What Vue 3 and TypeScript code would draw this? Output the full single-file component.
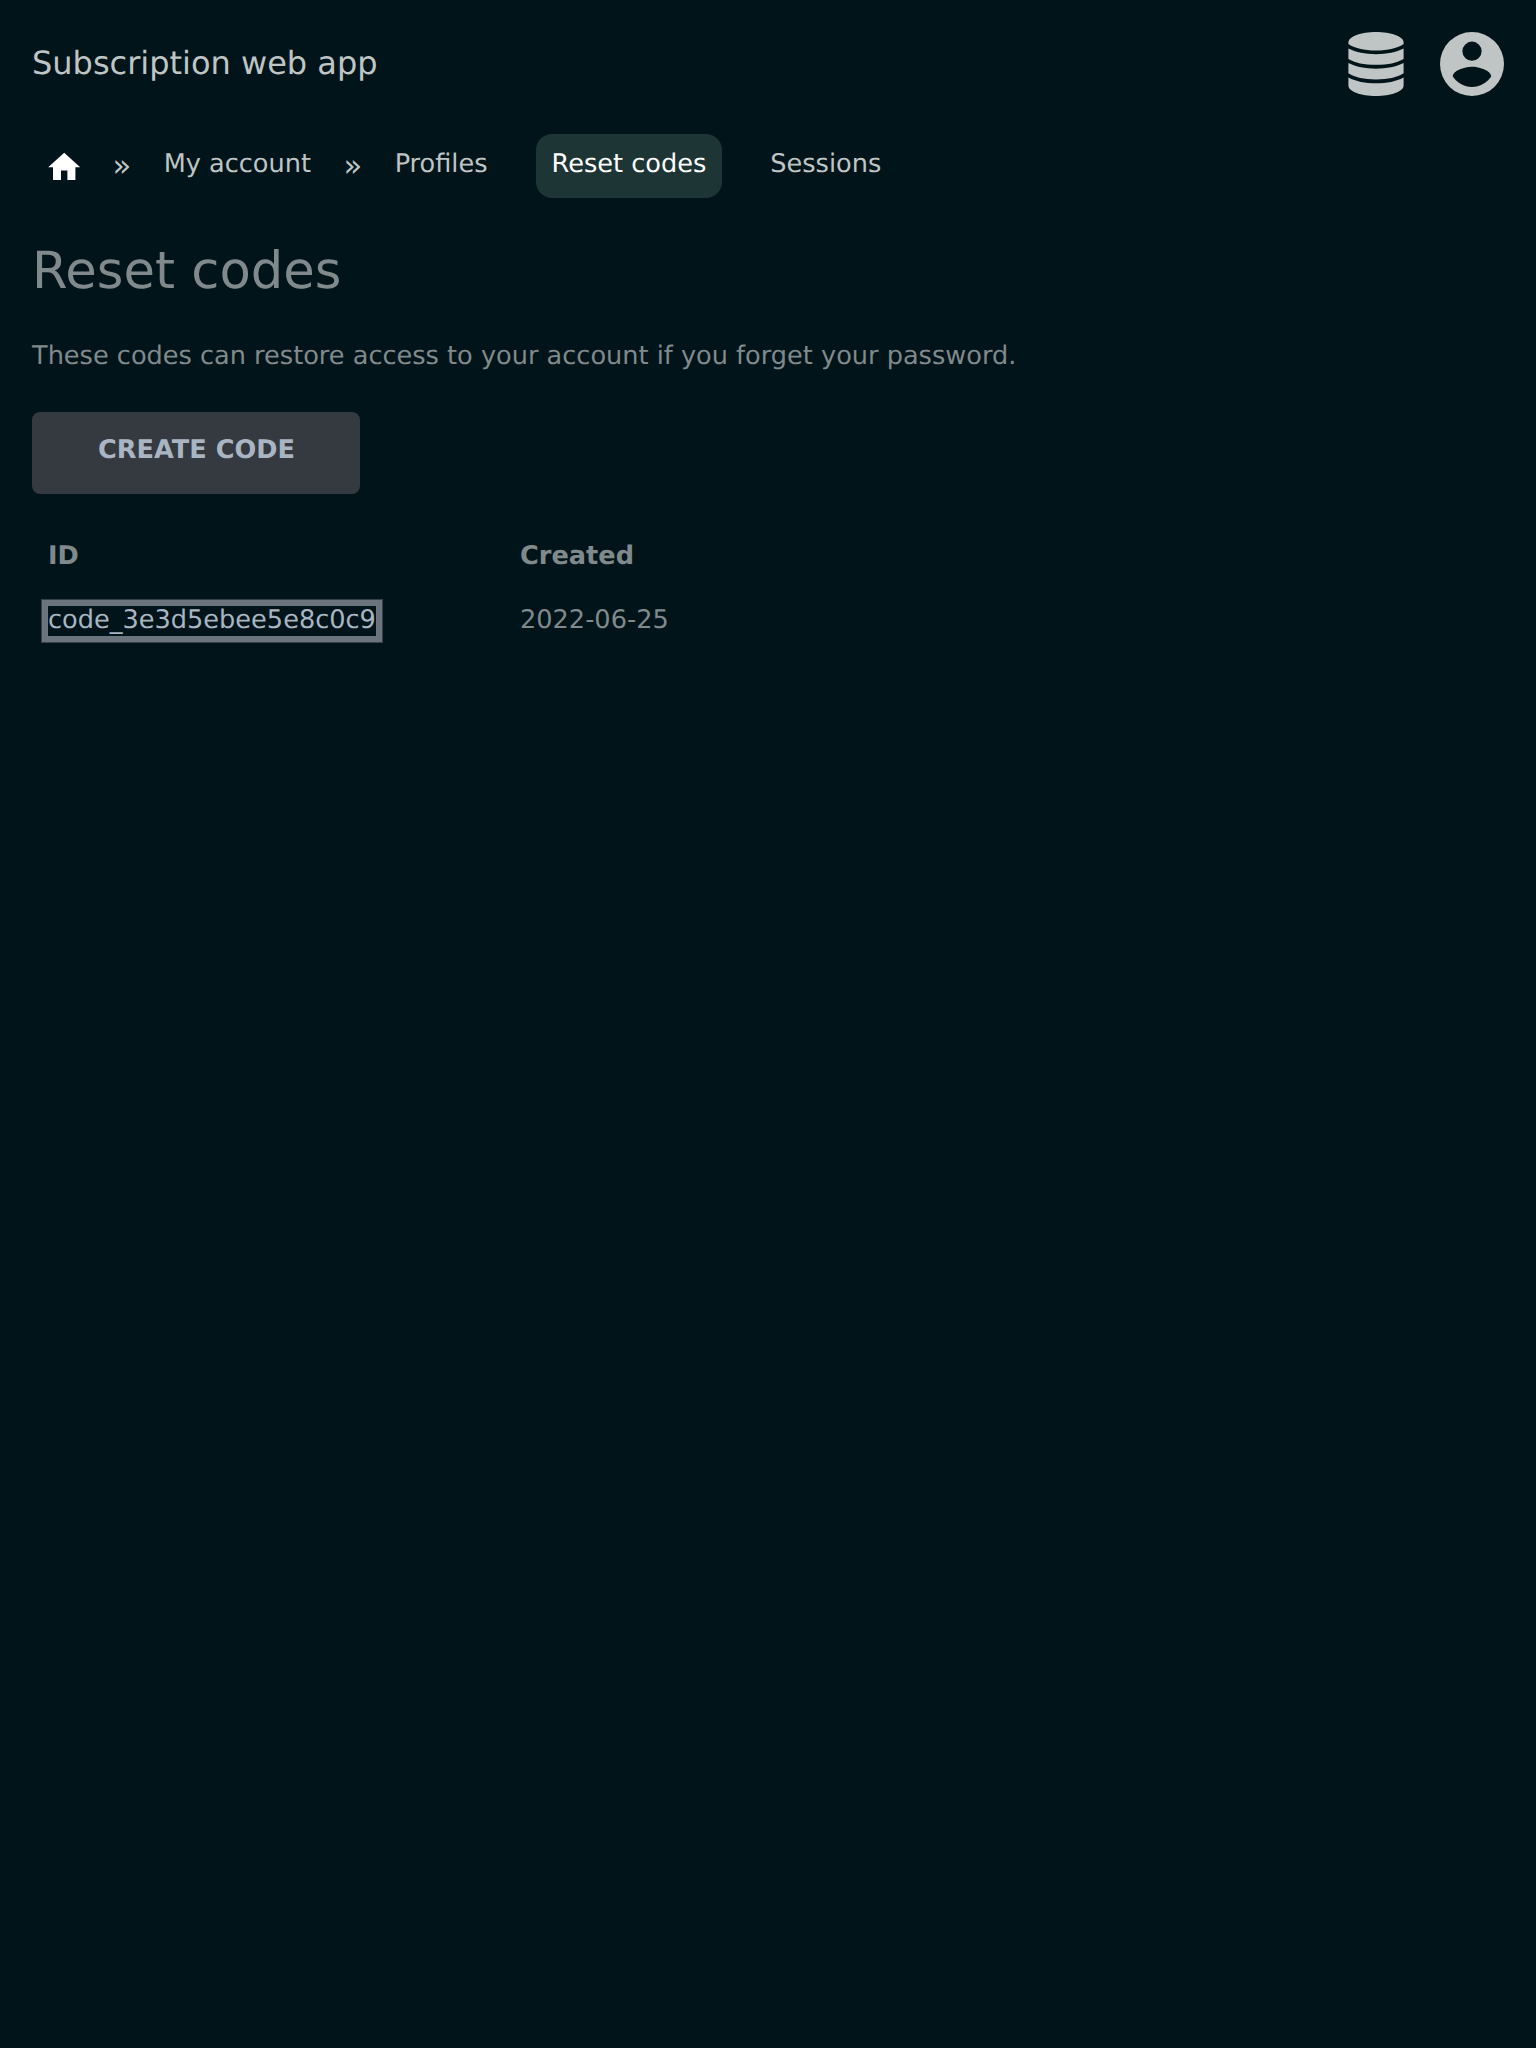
<script setup lang="ts">
interface Crumb {
  label: string
  active?: boolean
  separated?: boolean
}

interface ResetCode {
  id: string
  created: string
}

const crumbs: Crumb[] = [
  { label: 'My account', separated: true },
  { label: 'Profiles', separated: true },
  { label: 'Reset codes', active: true },
  { label: 'Sessions' },
]

const codes: ResetCode[] = [{ id: 'code_3e3d5ebee5e8c0c9', created: '2022-06-25' }]
</script>

<template>
  <div class="page">
    <header class="top">
      <span class="brand">Subscription web app</span>
      <div class="tools">
        <svg class="tool" viewBox="0 0 64 64" aria-label="Data">
          <path d="M4.400 10.500C4.400 4.500 17 0 32 0S59.600 4.500 59.600 10.500V12C54 16 44 18.500 32 18.500S10 16 4.400 12Z" />
          <path d="M4.400 16.600C12 20.500 21 22.200 32 22.200S52 20.500 59.600 16.600V26.900C53 30.800 44 32.800 32 32.800S11 30.800 4.400 26.900Z" />
          <path d="M4.400 31.100C12 35 21 36.700 32 36.700S52 35 59.600 31.100V41.300C53 45.400 44 47.500 32 47.500S11 45.400 4.400 41.300Z" />
          <path d="M4.400 45.400C12 49.400 21 51.200 32 51.200S52 49.400 59.600 45.400V53.500C59.600 59.500 47 64 32 64S4.400 59.500 4.400 53.500Z" />
        </svg>
        <svg class="tool" viewBox="0 0 64 64" aria-label="Account">
          <path
            fill-rule="evenodd"
            d="M32 0a32 32 0 1 0 0 64a32 32 0 1 0 0-64ZM32 9.600a9.600 9.600 0 1 1 0 19.200a9.600 9.600 0 1 1 0-19.200ZM32 55C24 55 17 50.800 12.800 44.500C12.900 38.200 25.600 34.800 32 34.800S51.100 38.200 51.200 44.500C47 50.800 40 55 32 55Z"
          />
        </svg>
      </div>
    </header>

    <nav class="crumbs">
      <a class="home">
        <svg viewBox="0 0 24 24" aria-label="Home">
          <path d="M10 20v-6h4v6h5v-8h3L12 3 2 12h3v8z" />
        </svg>
      </a>
      <template v-for="crumb in crumbs" :key="crumb.label">
        <span class="gap" :class="{ separator: crumb.separated }">{{ crumb.separated ? '»' : '' }}</span>
        <a class="crumb" :class="{ active: crumb.active }">{{ crumb.label }}</a>
      </template>
    </nav>

    <main>
      <h1>Reset codes</h1>
      <p>These codes can restore access to your account if you forget your password.</p>
      <button type="button">CREATE CODE</button>
      <table>
        <thead>
          <tr><th class="id">ID</th><th>Created</th></tr>
        </thead>
        <tbody>
          <tr v-for="code in codes" :key="code.id">
            <td class="code-cell"><a class="code">{{ code.id }}</a></td>
            <td>{{ code.created }}</td>
          </tr>
        </tbody>
      </table>
    </main>
  </div>
</template>

<style>
body {
  background: #001419;
}
</style>

<style scoped>
.page {
  box-sizing: border-box;
  min-height: 2048px;
  padding: 32px;
  background: #001419;
  color: #808a8c;
  font-family: 'DejaVu Sans', sans-serif;
  font-size: 25.6px;
  line-height: 32px;
  text-rendering: geometricPrecision;
}
.top {
  display: flex;
  justify-content: space-between;
  height: 64px;
  color: #bfc4c5;
}
.brand {
  font-size: 32px;
  line-height: 62px;
}
.tools {
  display: flex;
  gap: 32px;
}
.tool {
  width: 64px;
  height: 64px;
  fill: #bfc4c5;
}
.crumbs {
  display: flex;
  height: 64px;
  margin-top: 38px;
  color: #bfc4c5;
}
.home {
  box-sizing: border-box;
  width: 64px;
  padding: 13.6px 12.8px 0;
}
.home svg {
  display: block;
  width: 38.4px;
  height: 38.4px;
  fill: #fff;
}
.gap {
  width: 32px;
  text-align: center;
  font-size: 30.72px;
  line-height: 64px;
}
.gap.separator {
  width: 51.66px;
}
.crumb {
  padding: 14px 16px 18px;
  border-radius: 16px;
}
.crumb.active {
  background: #1e3536;
  color: #fff;
}
h1 {
  margin: 41px 0 0;
  font-size: 51.2px;
  font-weight: 400;
  line-height: 64px;
}
p {
  margin: 37px 0 0;
}
button {
  display: block;
  width: 328px;
  height: 82px;
  margin: 40px 0 0;
  padding: 0 0 7px 1px;
  border: 0;
  border-radius: 8px;
  background: #353940;
  color: #a9b5c2;
  font: inherit;
  font-weight: 700;
  text-rendering: inherit;
}
table {
  margin-top: 29px;
  border-collapse: collapse;
}
th,
td {
  box-sizing: border-box;
  height: 64px;
  padding: 2px 16px 0;
  text-align: left;
}
.id {
  width: 472px;
}
.code-cell {
  padding-top: 19px;
  vertical-align: top;
}
.code {
  display: block;
  width: max-content;
  height: 30px;
  line-height: 28px;
  color: #a9b5c2;
  box-shadow:
    0 0 0 6px #6b737d,
    0 0 0 7px #364149;
}
</style>
